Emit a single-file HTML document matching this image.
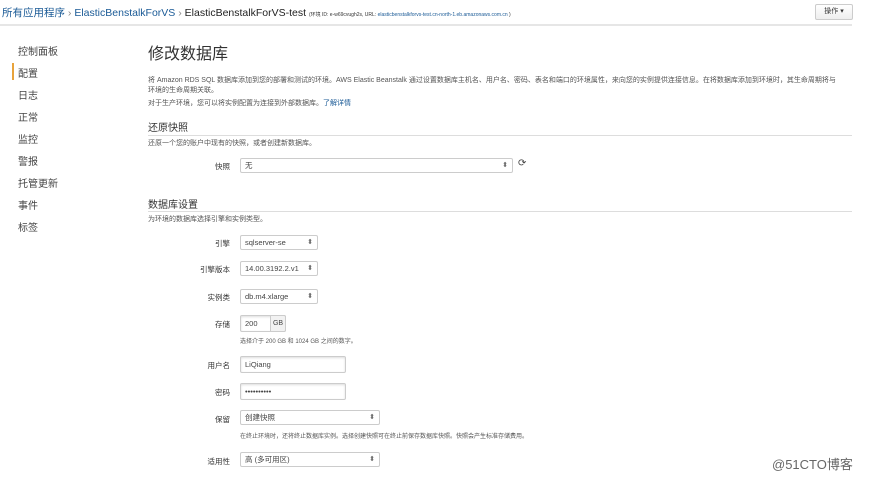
<!DOCTYPE html>
<html><head><meta charset="utf-8"><style>
*{margin:0;padding:0;box-sizing:border-box}
body{width:880px;height:478px;overflow:hidden;background:#fff;font-family:"Liberation Sans","Noto Sans CJK SC",sans-serif;color:#333;position:relative}
.a{position:absolute;white-space:nowrap}
.bc{top:5px;left:2px;font-size:10.5px;color:#1a5a96}
.bc .g{color:#888}
.bc .c{color:#222}
.hl{top:24px;left:0;width:852px;height:2px;background:#e6e6e6}
.btn{top:4px;left:815px;width:38px;height:16px;border:1px solid #ccc;border-radius:2px;background:linear-gradient(#fff,#eee);font-size:7px;text-align:center;line-height:14px;color:#333}
.nav{left:18px;font-size:10px;color:#444}
.bar{left:12px;top:63px;width:2px;height:17px;background:#e8a33c}
.t{left:148px;top:40px;font-size:16px;color:#333}
.p{left:148px;font-size:7px;color:#555}
.h{left:148px;font-size:10px;color:#333}
.line{left:148px;width:704px;height:1px;background:#ddd}
.lb{font-size:7.5px;color:#333;text-align:right;width:80px;left:150px}
.f{left:240px;height:15px;border:1px solid #ccc;border-radius:2px;background:#fff;font-size:7.5px;line-height:13px;padding-left:4px;color:#444}
.f.s::after{content:"⬍";position:absolute;right:4px;top:0;font-size:7px;color:#666}
.in{box-shadow:inset 0 1px 2px #ddd;height:17px;line-height:15px}
</style></head><body>
<div class="a bc">所有应用程序 <span class="g">›</span> ElasticBenstalkForVS <span class="g">›</span> <span class="c">ElasticBenstalkForVS-test</span> <span style="font-size:5px;color:#333">(环境 ID: e-w69cvugh2s, URL: <span style="color:#1a5a96">elasticbenstalkforvs-test.cn-north-1.eb.amazonaws.com.cn</span> )</span></div>
<div class="a btn">操作 ▾</div>
<div class="a hl"></div>
<div class="a nav" style="top:43px">控制面板</div>
<div class="a bar"></div>
<div class="a nav" style="top:65px">配置</div>
<div class="a nav" style="top:87px">日志</div>
<div class="a nav" style="top:109px">正常</div>
<div class="a nav" style="top:131px">监控</div>
<div class="a nav" style="top:153px">警报</div>
<div class="a nav" style="top:175px">托管更新</div>
<div class="a nav" style="top:197px">事件</div>
<div class="a nav" style="top:219px">标签</div>
<div class="a t">修改数据库</div>
<div class="a p" style="top:75px">将 Amazon RDS SQL 数据库添加到您的部署和测试的环境。AWS Elastic Beanstalk 通过设置数据库主机名、用户名、密码、表名和端口的环境属性，来向您的实例提供连接信息。在将数据库添加到环境时，其生命周期将与</div>
<div class="a p" style="top:85px">环境的生命周期关联。</div>
<div class="a p" style="top:98px">对于生产环境，您可以将实例配置为连接到外部数据库。<span style="color:#1a5a96">了解详情</span></div>
<div class="a h" style="top:119px">还原快照</div>
<div class="a line" style="top:135px"></div>
<div class="a p" style="top:138px">还原一个您的账户中现有的快照，或者创建新数据库。</div>
<div class="a lb" style="top:161px">快照</div>
<div class="a f s" style="top:158px;width:273px">无</div>
<div class="a" style="left:518px;top:158px;font-size:10px;color:#444">⟳</div>
<div class="a h" style="top:196px">数据库设置</div>
<div class="a line" style="top:211px"></div>
<div class="a p" style="top:214px">为环境的数据库选择引擎和实例类型。</div>
<div class="a lb" style="top:238px">引擎</div>
<div class="a f s" style="top:235px;width:78px">sqlserver-se</div>
<div class="a lb" style="top:264px">引擎版本</div>
<div class="a f s" style="top:261px;width:78px">14.00.3192.2.v1</div>
<div class="a lb" style="top:292px">实例类</div>
<div class="a f s" style="top:289px;width:78px">db.m4.xlarge</div>
<div class="a lb" style="top:319px">存储</div>
<div class="a f in" style="top:315px;width:46px">200<span style="position:absolute;left:29px;top:-1px;width:16px;height:17px;border:1px solid #ccc;border-radius:0 2px 2px 0;background:#f2f2f2;font-size:7px;text-align:center;line-height:15px">GB</span></div>
<div class="a p" style="top:336px;left:240px;font-size:6px">选择介于 200 GB 和 1024 GB 之间的数字。</div>
<div class="a lb" style="top:360px">用户名</div>
<div class="a f in" style="top:356px;width:106px">LiQiang</div>
<div class="a lb" style="top:387px">密码</div>
<div class="a f in" style="top:383px;width:106px">••••••••••</div>
<div class="a lb" style="top:414px">保留</div>
<div class="a f s" style="top:410px;width:140px">创建快照</div>
<div class="a p" style="top:431px;left:240px;font-size:6px">在终止环境时，还将终止数据库实例。选择创建快照可在终止前保存数据库快照。快照会产生标准存储费用。</div>
<div class="a lb" style="top:456px">适用性</div>
<div class="a f s" style="top:452px;width:140px">高 (多可用区)</div>
<div class="a" style="left:772px;top:454px;font-size:13px;color:#666">@51CTO博客</div>
</body></html>
